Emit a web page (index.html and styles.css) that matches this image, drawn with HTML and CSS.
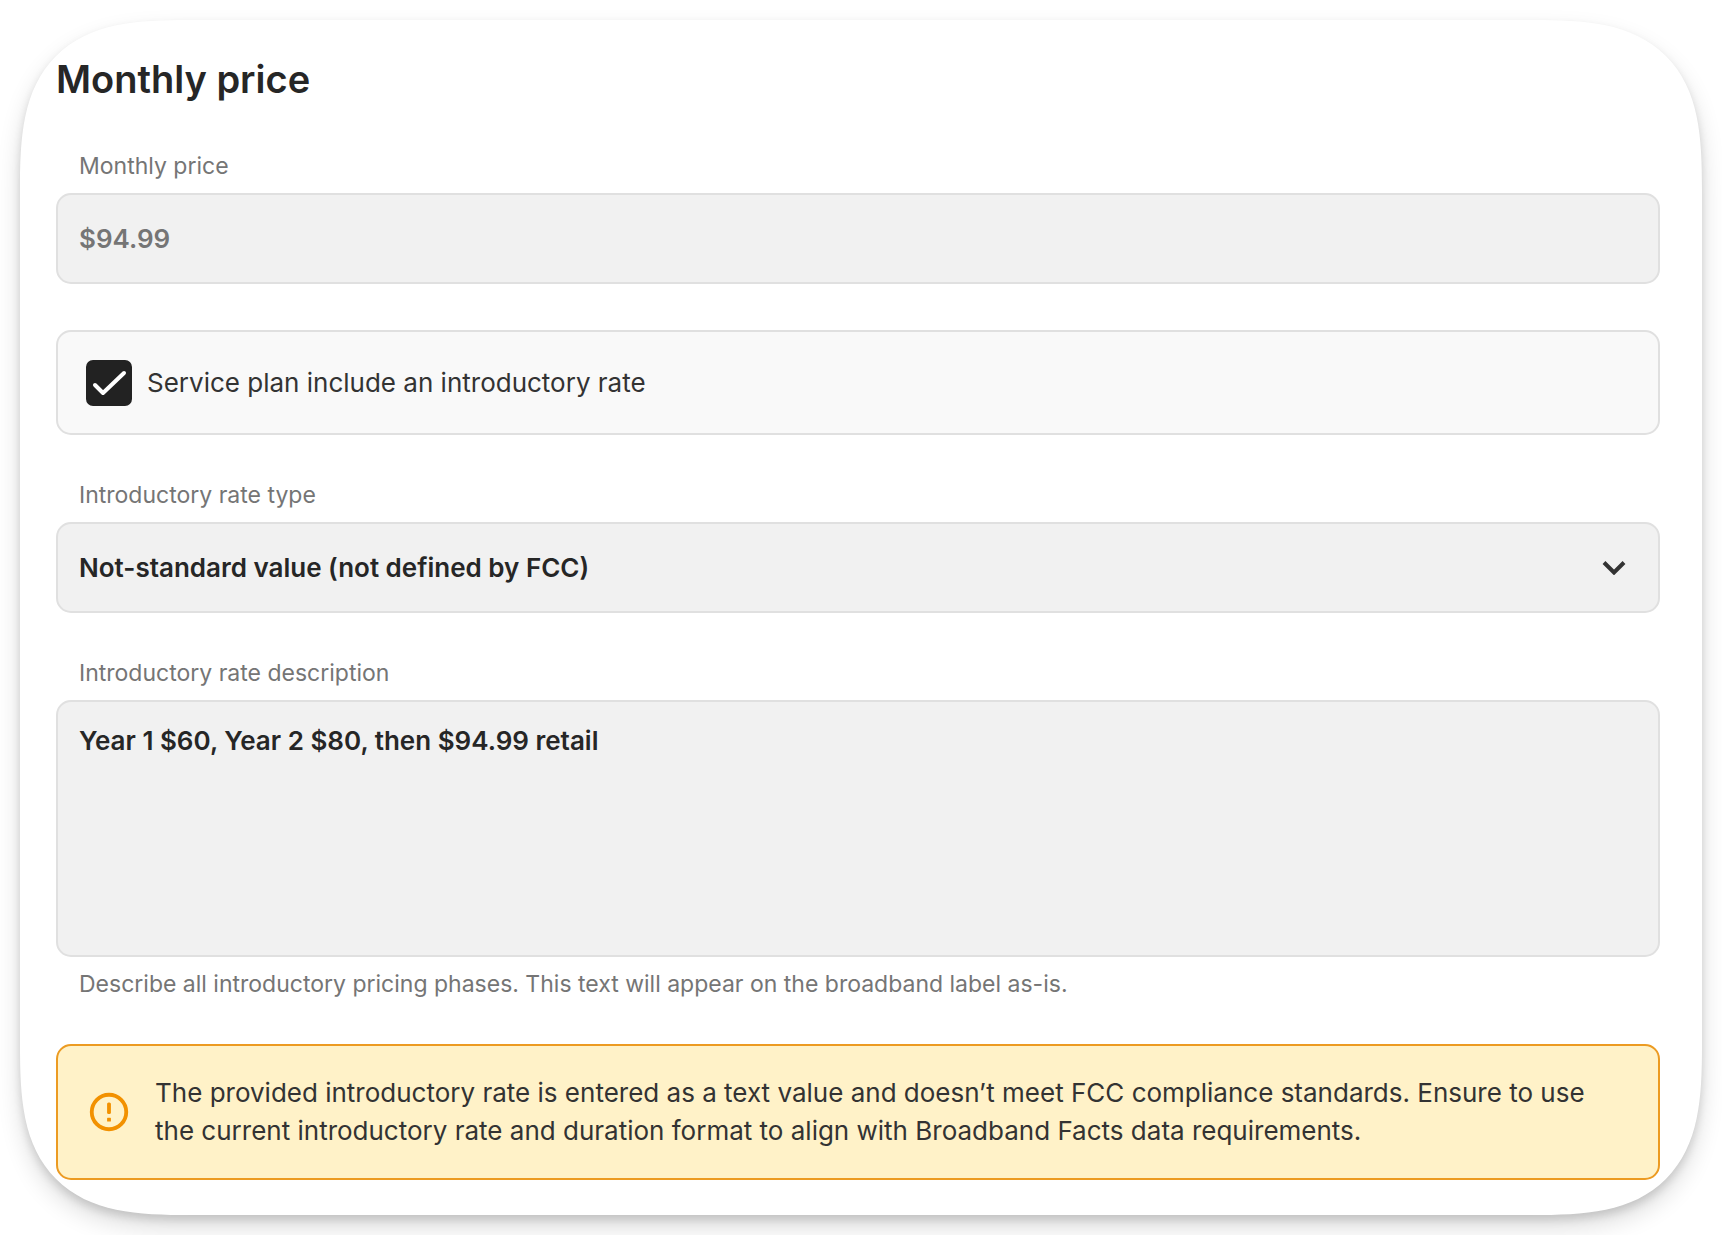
FILE: index.html
```
<!DOCTYPE html>
<html lang="en">
<head>
    <meta charset="UTF-8">
    <meta name="viewport" content="width=device-width, initial-scale=1.0">
    <title>Monthly price</title>
    <link rel="stylesheet" href="styles.css">
</head>
<body>
    <form class="card">
        <h1>Monthly price</h1>

        <div class="form-group">
            <label for="monthly-price">Monthly price</label>
            <input type="text" id="monthly-price" class="control" name="monthly-price" value="$94.99" disabled>
        </div>

        <label class="check-row">
            <span class="check">
                <input type="checkbox" name="has-intro-rate" checked>
                <svg viewBox="0 0 46 46" aria-hidden="true"><path d="M9 25l8 8L38 13"/></svg>
            </span>
            Service plan include an introductory rate
        </label>

        <div class="form-group">
            <label for="rate-type">Introductory rate type</label>
            <div class="select">
                <select id="rate-type" class="control" name="rate-type">
                    <option>Not-standard value (not defined by FCC)</option>
                </select>
                <svg viewBox="0 0 24 14" aria-hidden="true"><path d="M2 1.500l10 10L22 1.500"/></svg>
            </div>
        </div>

        <div class="form-group">
            <label for="rate-description">Introductory rate description</label>
            <textarea id="rate-description" class="control" name="rate-description" aria-describedby="rate-help">Year 1 $60, Year 2 $80, then $94.99 retail</textarea>
            <p id="rate-help" class="help">Describe all introductory pricing phases. This text will appear on the broadband label as-is.</p>
        </div>

        <div class="alert" role="alert">
            <svg viewBox="0 0 24 24" aria-hidden="true">
                <circle cx="12" cy="12" r="9" fill="none" stroke="currentColor" stroke-width="2"/>
                <rect x="11" y="7" width="2" height="6" rx="0.8" fill="currentColor"/>
                <rect x="11" y="15" width="2" height="2" rx="0.3" fill="currentColor"/>
            </svg>
            <p>The provided introductory rate is entered as a text value and doesn’t meet FCC compliance standards. Ensure to use the current introductory rate and duration format to align with Broadband Facts data requirements.</p>
        </div>
    </form>
</body>
</html>
```
FILE: styles.css
```
* {
    box-sizing: border-box;
}
body {
    font-family: Inter, sans-serif;
    background-color: #fff;
    color: #262626;
    margin: 0;
    padding: 20px;
}
.card {
    display: flex;
    flex-direction: column;
    gap: 46px;
    padding: 36px 42px 35px 36px;
    background-color: #fff;
    border-radius: 126px;
    box-shadow: 0 5px 8px rgba(0, 0, 0, 0.13), 0 12px 24px rgba(0, 0, 0, 0.14);
}
/* smoother corners where the browser can draw them */
@supports (corner-shape: squircle) {
    .card {
        border-radius: 170px;
        corner-shape: superellipse(1.54);
    }
}
h1 {
    margin: 0 0 4px;
    font-size: 38px;
    line-height: 46px;
    font-weight: 600;
}
p {
    margin: 0;
}
.form-group {
    display: flex;
    flex-direction: column;
    gap: 13px;
}
.form-group label,
.help {
    padding: 0 23px;
    font-size: 23px;
    line-height: 28px;
    color: #757575;
}
.control {
    display: block;
    width: 100%;
    height: 91px;
    margin: 0;
    padding: 0 21px;
    border: 2px solid #e0e0e0;
    border-radius: 15px;
    background-color: #f1f1f1;
    color: #262626;
    font-family: inherit;
    font-size: 26px;
    line-height: 38px;
    font-weight: 600;
    appearance: none;
}
.control:disabled {
    color: #757575;
}
textarea.control {
    height: 257px;
    padding: 20px 21px;
    resize: none;
}
.select {
    position: relative;
}
.select svg {
    position: absolute;
    top: 50%;
    right: 34px;
    width: 24px;
    height: 14px;
    margin-top: -7px;
    fill: none;
    stroke: #333;
    stroke-width: 4;
    pointer-events: none;
}
.check-row {
    display: flex;
    align-items: center;
    gap: 15px;
    min-height: 105px;
    padding: 20px 28px;
    border: 2px solid #e0e0e0;
    border-radius: 15px;
    background-color: #f9f9f9;
    font-size: 26px;
    line-height: 38px;
    color: #333;
}
.check {
    display: grid;
    flex: none;
    width: 46px;
    height: 46px;
}
.check input,
.check svg {
    grid-area: 1 / 1;
    width: 46px;
    height: 46px;
    margin: 0;
}
.check input {
    appearance: none;
    border: 2px solid #222;
    border-radius: 7px;
    background-color: #fff;
}
.check input:checked {
    background-color: #222;
}
.check svg {
    fill: none;
    stroke: #fff;
    stroke-width: 4;
    stroke-linecap: round;
    stroke-linejoin: round;
    pointer-events: none;
}
.alert {
    display: flex;
    align-items: center;
    gap: 23px;
    padding: 28px;
    border: 2px solid #ec9b22;
    border-radius: 15px;
    background-color: #fff2c8;
    font-size: 26px;
    line-height: 38px;
    color: #333;
}
.alert svg {
    flex: none;
    width: 46px;
    height: 46px;
    color: #f29100;
}
```
